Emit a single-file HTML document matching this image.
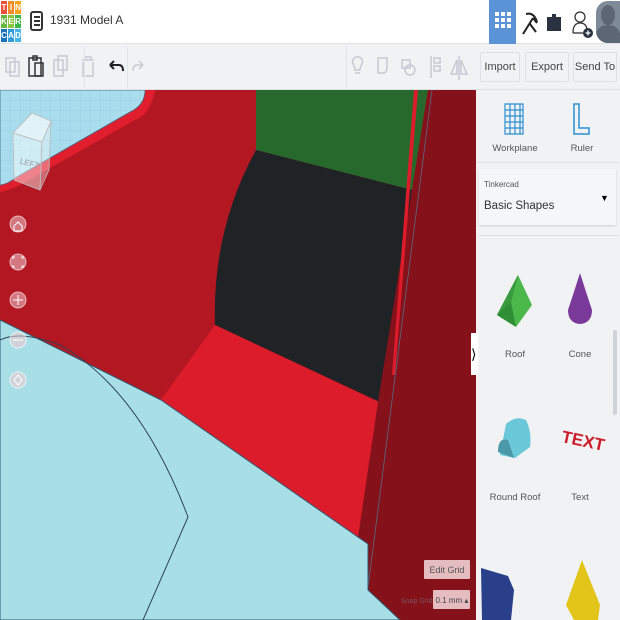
<!DOCTYPE html>
<html><head><meta charset="utf-8"><style>
*{margin:0;padding:0;box-sizing:border-box}
body{width:620px;height:620px;overflow:hidden;font-family:"Liberation Sans",sans-serif;background:#fff;position:relative}
.abs{position:absolute}
.hdr{left:0;top:0;width:620px;height:44px;background:#fff;border-bottom:1px solid #dde1e6}
.tb{left:0;top:44px;width:620px;height:46px;background:#f1f2f4;border-bottom:1px solid #dde1e6}
.logo div{position:absolute;width:6px;height:13px;color:#fff;font-size:8px;font-weight:bold;text-align:center;line-height:13px}
.btn{top:52px;height:30px;border:1px solid #dde1e6;border-radius:2px;font-size:11px;color:#444;text-align:center;line-height:28px;background:#f1f2f4}
.side{left:476px;top:90px;width:144px;height:530px;background:#f1f2f4}
.lbl{font-size:9.5px;color:#555;text-align:center;width:60px}
</style></head><body>
<div class="abs hdr"></div>
<div class="abs logo" style="left:1px;top:1px;width:21px;height:42px">
<div style="left:0;top:0;background:#e94e3a">T</div><div style="left:7px;top:0;background:#f28c28">I</div><div style="left:14px;top:0;background:#f7a21b">N</div>
<div style="left:0;top:14px;background:#65b543">K</div><div style="left:7px;top:14px;background:#8cc63f">E</div><div style="left:14px;top:14px;background:#3cb44a">R</div>
<div style="left:0;top:28px;background:#1a71b8">C</div><div style="left:7px;top:28px;background:#2d9bd6">A</div><div style="left:14px;top:28px;background:#4ab4e6">D</div>
</div>
<svg class="abs" style="left:30px;top:11px" width="14" height="20"><rect x="1" y="1" width="11" height="18" rx="2" fill="none" stroke="#333" stroke-width="2"/><path d="M4 6h6M4 10h6M4 14h6" stroke="#333" stroke-width="2"/></svg>
<div class="abs" style="left:50px;top:13px;font-size:12px;color:#333">1931 Model A</div>
<div class="abs" style="left:489px;top:0;width:27px;height:44px;background:#5a93d6"></div>
<svg class="abs" style="left:495px;top:12px" width="16" height="20"><g fill="#fff"><rect x="0" y="0" width="4" height="4"/><rect x="6" y="0" width="4" height="4"/><rect x="12" y="0" width="4" height="4"/><rect x="0" y="6" width="4" height="4"/><rect x="6" y="6" width="4" height="4"/><rect x="12" y="6" width="4" height="4"/><rect x="0" y="12" width="4" height="4"/><rect x="6" y="12" width="4" height="4"/><rect x="12" y="12" width="4" height="4"/></g></svg>
<svg class="abs" style="left:520px;top:10px" width="20" height="26"><path d="M3 24L13 8M6 4q8 -2 11 8M13 8l4 5M10 14l6 8" stroke="#222" stroke-width="2" fill="none"/></svg>
<svg class="abs" style="left:546px;top:13px" width="16" height="18"><path d="M1 4h5v-3h4v3h5v14h-14z" fill="#2a3240"/></svg>
<svg class="abs" style="left:572px;top:9px" width="22" height="30"><circle cx="8" cy="8" r="5" fill="none" stroke="#333" stroke-width="1.3"/><path d="M1 24q0-10 7-10q7 0 7 8" fill="none" stroke="#333" stroke-width="1.3"/><path d="M1 24h10" stroke="#333" stroke-width="1.3"/><circle cx="16" cy="24" r="5" fill="#2a3240"/><path d="M13.5 24h5M16 21.5v5" stroke="#fff" stroke-width="1.3"/></svg>
<div class="abs" style="left:596px;top:1px;width:24px;height:42px;border-radius:12px 0 0 12px;background:#7e8a98;overflow:hidden"><div style="position:absolute;left:5px;top:4px;width:14px;height:20px;border-radius:50%;background:#5c6674"></div><div style="position:absolute;left:0;top:24px;width:24px;height:20px;border-radius:50% 50% 0 0;background:#5c6674"></div></div>

<div class="abs tb"></div>
<svg class="abs" style="left:0;top:48px" width="480" height="40" fill="none" stroke="#c5cad1" stroke-width="1.5">
<rect x="6" y="10" width="9" height="14"/><rect x="10" y="14" width="9" height="14"/>
<rect x="29" y="10" width="12" height="18" stroke="#333"/><rect x="33" y="8" width="4" height="4" stroke="#333"/><rect x="35" y="15" width="8" height="13" stroke="#333"/>
<rect x="58" y="8" width="9" height="14"/><rect x="54" y="12" width="9" height="16"/>
<path d="M82 12h12M85 12v-3h6v3M83 14v14h10v-14"/>
<path d="M110 17h9q4 0 4 6M110 17l4-4M110 17l4 4" stroke="#222" stroke-width="2"/>
<path d="M143 17h-6q-4 0-4 6M143 17l-4-4M143 17l-4 4"/>
<path d="M353 16a5 5 0 1 1 9 0q-2 3-2 6h-5q0-3-2-6zM355 25h5"/>
<path d="M378 10h9v9q0 6-4 6h-5z"/><path d="M402 12h8v8h-8z"/><circle cx="410" cy="22" r="5"/>
<path d="M431 8v22M434 10h6v5h-6zM434 18h6v5h-6z"/><path d="M459 8v24M457 26l-6 0 6-14zM461 26h6l-6-14z"/>
</svg>
<div class="abs" style="left:127px;top:46px;width:1px;height:42px;background:#e2e5e9"></div>
<div class="abs" style="left:84px;top:46px;width:1px;height:42px;background:#e2e5e9"></div>
<div class="abs" style="left:346px;top:46px;width:1px;height:42px;background:#e2e5e9"></div>
<div class="abs btn" style="left:480px;width:40px">Import</div>
<div class="abs btn" style="left:525px;width:44px">Export</div>
<div class="abs btn" style="left:573px;width:44px">Send To</div>

<svg class="abs" style="left:0;top:90px" width="476" height="530" viewBox="0 90 476 530">
<defs><pattern id="g" width="10" height="10" patternUnits="userSpaceOnUse"><rect width="10" height="10" fill="#a9dcec"/><path d="M0 0h10M0 0v10" stroke="#8ccbe0" stroke-width="0.6"/></pattern></defs>
<rect x="0" y="90" width="476" height="530" fill="#b21722"/>
<path d="M0 90H155Q150 115 135 120L20 185Q10 190 0 192Z" fill="#e01e2d"/>
<path d="M0 90H145Q145 105 130 112L15 178Q8 184 0 185Z" fill="url(#g)" stroke="#3d6b86" stroke-width="0.8"/>
<path d="M256 90H428L412 190L256 150Z" fill="#27692d"/>
<path d="M256 150L412 190L380 402L215 325Q212 230 256 150Z" fill="#202326"/>
<path d="M215 325L378 402L358 538L161 400Z" fill="#dd1c2b"/>
<path d="M428 90H476V620H400L367 595L358 538L378 402L412 190Z" fill="#85111b"/>
<path d="M418 90L395 375L392 375L414 90Z" fill="#dd1c2b"/>
<path d="M432 90L367 595" stroke="#5a6a80" stroke-width="0.8"/>
<path d="M0 320L161 400L368 544L368 590L400 620H0Z" fill="#a8dfe7" stroke="#2d5a73" stroke-width="1"/>
<path d="M0 340Q20 330 60 345Q140 390 188 517L143 620" fill="none" stroke="#2d4458" stroke-width="1"/>
<g fill="rgba(240,200,205,0.55)" stroke="rgba(255,255,255,0.6)">
<circle cx="18" cy="224" r="8"/><circle cx="18" cy="262" r="8"/><circle cx="18" cy="300" r="8"/><circle cx="18" cy="340" r="8"/><circle cx="18" cy="380" r="8"/></g>
<g stroke="#fff" fill="none" stroke-width="1"><path d="M13 300h10M18 295v10M14 226l4-4 4 4v5h-8z M13 259v-2h2M21 257h2v2M13 265v2h2M23 265v2h-2M13 340h10M14 380l4-5 4 5-4 5z"/></g>
<g stroke="#bbb" stroke-width="0.8">
<path d="M13 133L32 113L51 121L42 142Z" fill="rgba(255,255,255,0.65)"/>
<path d="M13 133L42 142L40 190L14 180Z" fill="rgba(255,255,255,0.45)"/>
<path d="M42 142L51 121L49 170L40 190Z" fill="rgba(255,255,255,0.35)"/></g>
<text x="20" y="165" font-size="8" fill="#999" transform="rotate(15 26 162)">LEFT</text>
<rect x="424" y="560" width="46" height="19" rx="1" fill="#e5bcc0"/>
<text x="447" y="573" font-size="9" fill="#555" text-anchor="middle">Edit Grid</text>
<text x="401" y="603" font-size="7" fill="#7a5560">Snap Grid</text>
<rect x="433" y="590" width="37" height="19" rx="1" fill="#e5bcc0"/>
<text x="452" y="603" font-size="8" fill="#444" text-anchor="middle">0.1 mm ▴</text>
</svg>

<div class="abs side"></div>
<div class="abs" style="left:471px;top:333px;width:7px;height:42px;background:#fff;font-size:14px;line-height:42px">&#10217;</div>
<svg class="abs" style="left:503px;top:102px" width="24" height="34"><path d="M2 2h18v30h-18zM2 8h18M2 14h18M2 20h18M2 26h18M7 2v30M12 2v30M17 2v30" fill="none" stroke="#2c8fd1" stroke-width="1.2"/></svg>
<svg class="abs" style="left:572px;top:102px" width="20" height="34"><path d="M2 2h5v24h10v6h-15z" fill="none" stroke="#2c8fd1" stroke-width="1.5"/></svg>
<div class="abs lbl" style="left:485px;top:143px">Workplane</div>
<div class="abs lbl" style="left:552px;top:143px">Ruler</div>
<div class="abs" style="left:478px;top:162px;width:140px;height:1px;background:#dde1e6"></div>
<div class="abs" style="left:479px;top:169px;width:137px;height:56px;background:#f5f6f8;box-shadow:0 1px 2px rgba(0,0,0,.15)"></div>
<div class="abs" style="left:484px;top:180px;font-size:8px;color:#555">Tinkercad</div>
<div class="abs" style="left:484px;top:200px;font-size:11.5px;color:#333">Basic Shapes</div>
<div class="abs" style="left:600px;top:193px;font-size:9px;color:#000">▼</div>
<div class="abs" style="left:478px;top:235px;width:140px;height:1px;background:#dde1e6"></div>
<svg class="abs" style="left:476px;top:260px" width="144" height="360">
<polygon points="42,15 21,55 40,67 56,45" fill="#4cb84c"/><polygon points="42,15 21,55 40,67 35,42" fill="#2f8f35"/><polygon points="42,15 35,42 21,55" fill="#3a9a3e"/>
<path d="M104 13Q97 35 92 50Q92 63 104 64Q116 63 116 50Q111 35 104 13Z" fill="#7a3a9a"/>
<path d="M24 195L30 164Q40 155 50 160Q56 172 54 187L39 198Z" fill="#6bc8d8"/><path d="M22 192Q22 177 32 180L38 198Z" fill="#4a98a8"/>
<text x="86" y="186" font-size="17" font-weight="bold" fill="#cc1d2a" transform="rotate(12 105 178)">TEXT</text>
<path d="M5 308L32 316L38 330L35 360H6Z" fill="#2a3f8a"/>
<path d="M106 300L90 345L98 360H122L124 345Z" fill="#e3c51a"/>
</svg>
<div class="abs lbl" style="left:485px;top:349px">Roof</div>
<div class="abs lbl" style="left:550px;top:349px">Cone</div>
<div class="abs lbl" style="left:485px;top:492px">Round Roof</div>
<div class="abs lbl" style="left:550px;top:492px">Text</div>
<div class="abs" style="left:613px;top:330px;width:4px;height:85px;border-radius:2px;background:#cfd3d8"></div>
</body></html>
